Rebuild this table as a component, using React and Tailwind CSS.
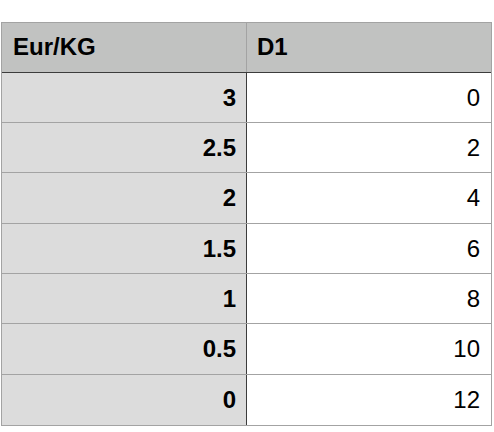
import React from "react";

const rows = [
  ["3", "0", "h-[50px]"],
  ["2.5", "2", "h-[50px]"],
  ["2", "4", "h-[51px]"],
  ["1.5", "6", "h-[50px]"],
  ["1", "8", "h-[50px]"],
  ["0.5", "10", "h-[51px]"],
  ["0", "12", "h-[50px]"],
];

const App = () => {
  return (
    <div className="min-h-screen bg-white pt-[22px] pl-px font-['Liberation_Sans',Arial,sans-serif] text-[24px] text-black">
      <div className="w-[491px] border border-[#a3a3a3]">
        {/* Header */}
        <div className="flex h-[50px] border-b border-[#3c3c3c] bg-[#c1c2c1] font-bold">
          <div className="flex w-[245px] items-center border-r border-[#a3a3a3] pb-px pl-[11px]">
            Eur/KG
          </div>
          <div className="flex flex-1 items-center pb-px pl-[10px]">D1</div>
        </div>

        {/* Rows */}
        {rows.map(([price, d1, h], i) => (
          <div
            key={i}
            className={`flex ${h} ${
              i < rows.length - 1 ? "border-b border-[#a3a3a3]" : ""
            }`}
          >
            <div className="flex w-[245px] items-center justify-end border-r border-[#3c3c3c] bg-[#dcdcdc] pr-[10px] font-bold">
              {price}
            </div>
            <div className="flex flex-1 items-center justify-end pr-[11px]">
              {d1}
            </div>
          </div>
        ))}
      </div>
    </div>
  );
};

export default App;
